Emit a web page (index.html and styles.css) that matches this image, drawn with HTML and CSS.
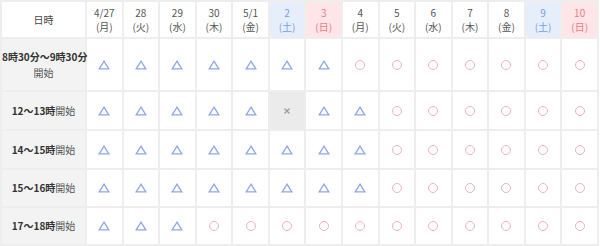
FILE: index.html
```html
<!DOCTYPE html>
<html lang="ja">
<head>
<meta charset="utf-8">
<link rel="stylesheet" href="styles.css">
</head>
<body>
<svg width="0" height="0" class="defs">
  <defs>
    <symbol id="tri" viewBox="0 0 12 10"><path d="M6 1.2 L10.8 8.8 L1.2 8.8 Z" fill="none" stroke="#8fa6ea" stroke-width="1.3" stroke-linejoin="miter"/></symbol>
    <symbol id="crs" viewBox="0 0 8 8"><path d="M1.5 1.5 L6.5 6.5 M6.5 1.5 L1.5 6.5" stroke="#9a9a9a" stroke-width="1.2"/></symbol>
  </defs>
</svg>
<table class="sched">
  <colgroup><col class="c-label"></colgroup>
  <thead>
    <tr class="head">
      <th class="lab-h">日時</th>
      <th>4/27<br>(月)</th><th>28<br>(火)</th><th>29<br>(水)</th><th>30<br>(木)</th><th>5/1<br>(金)</th>
      <th class="sat">2<br>(土)</th><th class="sun">3<br>(日)</th>
      <th>4<br>(月)</th><th>5<br>(火)</th><th>6<br>(水)</th><th>7<br>(木)</th><th>8<br>(金)</th>
      <th class="sat">9<br>(土)</th><th class="sun">10<br>(日)</th>
    </tr>
  </thead>
  <tbody>
    <tr class="r1">
      <th class="lab"><b>8時30分～9時30分</b><br>開始</th>
      <td><svg class="tri"><use href="#tri"/></svg></td><td><svg class="tri"><use href="#tri"/></svg></td><td><svg class="tri"><use href="#tri"/></svg></td><td><svg class="tri"><use href="#tri"/></svg></td><td><svg class="tri"><use href="#tri"/></svg></td><td><svg class="tri"><use href="#tri"/></svg></td><td><svg class="tri"><use href="#tri"/></svg></td>
      <td><span class="ok"></span></td><td><span class="ok"></span></td><td><span class="ok"></span></td><td><span class="ok"></span></td><td><span class="ok"></span></td><td><span class="ok"></span></td><td><span class="ok"></span></td>
    </tr>
    <tr class="r2">
      <th class="lab"><b>12～13時</b>開始</th>
      <td><svg class="tri"><use href="#tri"/></svg></td><td><svg class="tri"><use href="#tri"/></svg></td><td><svg class="tri"><use href="#tri"/></svg></td><td><svg class="tri"><use href="#tri"/></svg></td><td><svg class="tri"><use href="#tri"/></svg></td>
      <td class="ng"><svg class="crs"><use href="#crs"/></svg></td>
      <td><svg class="tri"><use href="#tri"/></svg></td><td><svg class="tri"><use href="#tri"/></svg></td>
      <td><span class="ok"></span></td><td><span class="ok"></span></td><td><span class="ok"></span></td><td><span class="ok"></span></td><td><span class="ok"></span></td><td><span class="ok"></span></td>
    </tr>
    <tr class="r3">
      <th class="lab"><b>14～15時</b>開始</th>
      <td><svg class="tri"><use href="#tri"/></svg></td><td><svg class="tri"><use href="#tri"/></svg></td><td><svg class="tri"><use href="#tri"/></svg></td><td><svg class="tri"><use href="#tri"/></svg></td><td><svg class="tri"><use href="#tri"/></svg></td><td><svg class="tri"><use href="#tri"/></svg></td><td><svg class="tri"><use href="#tri"/></svg></td><td><svg class="tri"><use href="#tri"/></svg></td>
      <td><span class="ok"></span></td><td><span class="ok"></span></td><td><span class="ok"></span></td><td><span class="ok"></span></td><td><span class="ok"></span></td><td><span class="ok"></span></td>
    </tr>
    <tr class="r4">
      <th class="lab"><b>15～16時</b>開始</th>
      <td><svg class="tri"><use href="#tri"/></svg></td><td><svg class="tri"><use href="#tri"/></svg></td><td><svg class="tri"><use href="#tri"/></svg></td><td><svg class="tri"><use href="#tri"/></svg></td><td><svg class="tri"><use href="#tri"/></svg></td><td><svg class="tri"><use href="#tri"/></svg></td><td><svg class="tri"><use href="#tri"/></svg></td><td><svg class="tri"><use href="#tri"/></svg></td>
      <td><span class="ok"></span></td><td><span class="ok"></span></td><td><span class="ok"></span></td><td><span class="ok"></span></td><td><span class="ok"></span></td><td><span class="ok"></span></td>
    </tr>
    <tr class="r5">
      <th class="lab"><b>17～18時</b>開始</th>
      <td><svg class="tri"><use href="#tri"/></svg></td><td><svg class="tri"><use href="#tri"/></svg></td><td><svg class="tri"><use href="#tri"/></svg></td>
      <td><span class="ok"></span></td><td><span class="ok"></span></td><td><span class="ok"></span></td><td><span class="ok"></span></td><td><span class="ok"></span></td><td><span class="ok"></span></td><td><span class="ok"></span></td><td><span class="ok"></span></td><td><span class="ok"></span></td><td><span class="ok"></span></td><td><span class="ok"></span></td>
    </tr>
  </tbody>
</table>
</body>
</html>
```

FILE: styles.css
```css
html, body {
  margin: 0;
  padding: 0;
  background: #ffffff;
}
body {
  font-family: "Noto Sans CJK JP", "Noto Sans", sans-serif;
  color: #444;
}
.defs {
  position: absolute;
  width: 0;
  height: 0;
}
.sched {
  border-collapse: collapse;
  table-layout: fixed;
  width: 599px;
  margin: 0;
}
.c-label {
  width: 85px;
}
.sched th,
.sched td {
  border: 2px solid #eeeeee;
  padding: 0;
  text-align: center;
  vertical-align: middle;
}
.head th {
  height: 35px;
  font-size: 10px;
  line-height: 14px;
  font-weight: 400;
  color: #555;
  background: #fff;
}
.head th.lab-h {
  color: #444;
}
.head th.sat {
  background: #e6eefb;
  color: #7aa0e6;
}
.head th.sun {
  background: #fde5e8;
  color: #ec7a88;
}
.lab {
  background: #f3f3f3;
  font-size: 10px;
  line-height: 16px;
  font-weight: 400;
  color: #555;
  white-space: nowrap;
}
.lab b {
  font-weight: 700;
  color: #333;
}
.r1 td, .r1 th { height: 51px; }
.r2 td, .r2 th { height: 37px; }
.r3 td, .r3 th { height: 37px; }
.r4 td, .r4 th { height: 36px; }
.r5 td, .r5 th { height: 36px; }
.tri {
  display: block;
  margin: 0 auto;
  width: 12px;
  height: 10px;
}
.crs {
  display: block;
  margin: 0 auto;
  width: 8px;
  height: 8px;
}
.ng {
  background: #ebebeb;
}
.ok {
  display: block;
  margin: 0 auto;
  width: 10px;
  height: 10px;
  box-sizing: border-box;
  border: 1.5px solid #f3b1bf;
  border-radius: 50%;
}
```
